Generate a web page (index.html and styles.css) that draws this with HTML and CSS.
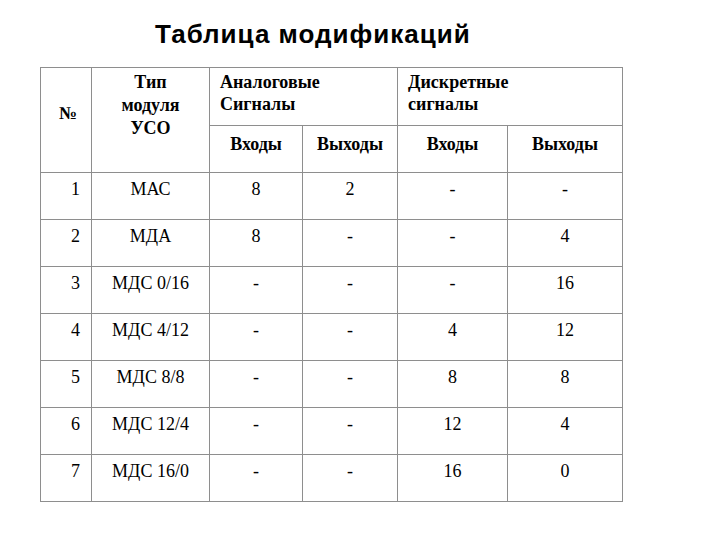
FILE: index.html
```html
<!DOCTYPE html>
<html lang="ru">
<head>
<meta charset="utf-8">
<title>Таблица модификаций</title>
<link rel="stylesheet" href="styles.css">
</head>
<body>
<div class="page">
  <h1 class="title">Таблица модификаций</h1>
  <table class="mods">
    <colgroup>
      <col class="c-num"><col class="c-type"><col class="c-ai"><col class="c-ao"><col class="c-di"><col class="c-do">
    </colgroup>
    <thead>
      <tr class="h1">
        <th rowspan="2" class="num-h">№</th>
        <th rowspan="2" class="type-h">Тип<br>модуля<br>УСО</th>
        <th colspan="2" class="group">Аналоговые<br>Сигналы</th>
        <th colspan="2" class="group">Дискретные<br>сигналы</th>
      </tr>
      <tr class="h2">
        <th>Входы</th><th>Выходы</th><th>Входы</th><th>Выходы</th>
      </tr>
    </thead>
    <tbody>
      <tr><td class="n">1</td><td>МАС</td><td>8</td><td>2</td><td>-</td><td>-</td></tr>
      <tr><td class="n">2</td><td>МДА</td><td>8</td><td>-</td><td>-</td><td>4</td></tr>
      <tr><td class="n">3</td><td>МДС 0/16</td><td>-</td><td>-</td><td>-</td><td>16</td></tr>
      <tr><td class="n">4</td><td>МДС 4/12</td><td>-</td><td>-</td><td>4</td><td>12</td></tr>
      <tr><td class="n">5</td><td>МДС 8/8</td><td>-</td><td>-</td><td>8</td><td>8</td></tr>
      <tr><td class="n">6</td><td>МДС 12/4</td><td>-</td><td>-</td><td>12</td><td>4</td></tr>
      <tr><td class="n">7</td><td>МДС 16/0</td><td>-</td><td>-</td><td>16</td><td>0</td></tr>
    </tbody>
  </table>
</div>
</body>
</html>
```

FILE: styles.css
```css
html, body {
  margin: 0;
  padding: 0;
  background: #ffffff;
}
.page {
  width: 720px;
  height: 540px;
  padding-top: 18px;
  box-sizing: border-box;
}
.title {
  margin: 0 0 0 155px;
  font-family: "Liberation Sans", Arial, sans-serif;
  font-weight: bold;
  font-size: 26px;
  letter-spacing: 1px;
  line-height: 32px;
  height: 49px;
  color: #000;
}
.mods {
  margin-left: 40px;
  border-collapse: collapse;
  table-layout: fixed;
  width: 582px;
  font-family: "Liberation Serif", "Times New Roman", serif;
  font-size: 18px;
  color: #000;
}
.c-num { width: 51px; }
.c-type { width: 118px; }
.c-ai { width: 93px; }
.c-ao { width: 95px; }
.c-di { width: 110px; }
.c-do { width: 115px; }
.mods th, .mods td {
  border: 1px solid #8e8e8e;
  padding: 0;
  vertical-align: top;
  text-align: center;
  line-height: 22px;
}
.mods th {
  font-weight: bold;
}
.h1 { height: 58px; }
.h2 { height: 47px; }
.h1 th { padding-top: 3px; }
.h2 th { padding-top: 7px; }
.num-h {
  vertical-align: middle !important;
  padding-bottom: 18px !important;
  padding-left: 4px !important;
}
.type-h { line-height: 23px !important; }
.group {
  text-align: left !important;
  padding-left: 10px !important;
}
.mods tbody tr { height: 47px; }
.mods td { padding-top: 5px; }
.mods td.n {
  text-align: right;
  padding-right: 11px;
}
```
